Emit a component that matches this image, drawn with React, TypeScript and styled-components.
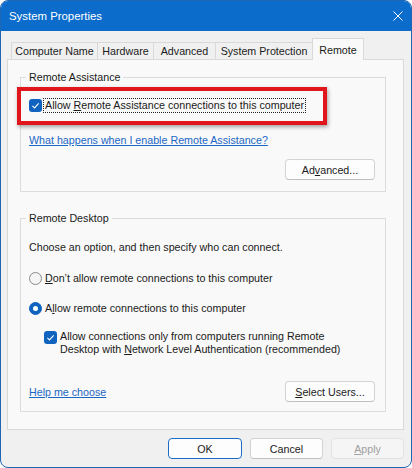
import React from 'react';
import { styled, createGlobalStyle } from 'styled-components';

const GlobalStyle = createGlobalStyle`
  html, body {
    margin: 0;
    padding: 0;
    background: #ffffff;
  }
  body {
    font-family: "Liberation Sans", Arial, sans-serif;
    font-size: 10.7px;
    color: #1a1a1a;
  }
`;

const CheckIcon: React.FC = () => (
  <svg width="13" height="13" viewBox="0 0 13 13">
    <path d="M3.4 6.9 L5.5 8.9 L9.7 4.4" fill="none" stroke="#fff" strokeWidth="1.1" />
  </svg>
);

const App: React.FC = () => {
  return (
    <>
      <GlobalStyle />
      <WindowStyle>
        <TitleBarStyle>
          <span>System Properties</span>
          <svg width="10" height="10" viewBox="0 0 10 10">
            <path d="M0.5 0.5 L9.5 9.5 M9.5 0.5 L0.5 9.5" stroke="#fff" strokeWidth="1" />
          </svg>
        </TitleBarStyle>
        <BodyStyle>
          <TabRowStyle>
            <TabStyle $w={87}>Computer Name</TabStyle>
            <TabStyle $w={57}>Hardware</TabStyle>
            <TabStyle $w={63}>Advanced</TabStyle>
            <TabStyle $w={98}>System Protection</TabStyle>
            <TabStyle $w={52} $active>
              Remote
            </TabStyle>
          </TabRowStyle>
          <PanelStyle>
            <GroupStyle $pb={11}>
              <legend>Remote Assistance</legend>
              <OptionRowStyle $mt={14}>
                <CheckBoxStyle>
                  <CheckIcon />
                </CheckBoxStyle>
                <FocusLabelStyle>
                  Allow <u>R</u>emote Assistance connections to this computer
                </FocusLabelStyle>
                <HighlightStyle />
              </OptionRowStyle>
              <LinkStyle $mt={21}>What happens when I enable Remote Assistance?</LinkStyle>
              <ActionRowStyle $mt={12}>
                <span />
                <ButtonStyle $w={90} $h={21}>
                  Ad<u>v</u>anced...
                </ButtonStyle>
              </ActionRowStyle>
            </GroupStyle>

            <GroupStyle $mt={19} $pb={9}>
              <legend>Remote Desktop</legend>
              <TextStyle>Choose an option, and then specify who can connect.</TextStyle>
              <OptionRowStyle $mt={17}>
                <RadioStyle />
                <span>
                  <u>D</u>on&rsquo;t allow remote connections to this computer
                </span>
              </OptionRowStyle>
              <OptionRowStyle $mt={16}>
                <RadioStyle $checked />
                <span>
                  A<u>l</u>low remote connections to this computer
                </span>
              </OptionRowStyle>
              <NestedOptionStyle>
                <CheckBoxStyle>
                  <CheckIcon />
                </CheckBoxStyle>
                <span>
                  Allow connections only from computers running Remote
                  <br />
                  Desktop with <u>N</u>etwork Level Authentication (recommended)
                </span>
              </NestedOptionStyle>
              <ActionRowStyle $mt={25}>
                <LinkStyle $mt={0}>Help me choose</LinkStyle>
                <ButtonStyle $w={90} $h={21}>
                  <u>S</u>elect Users...
                </ButtonStyle>
              </ActionRowStyle>
            </GroupStyle>
          </PanelStyle>
          <FooterStyle>
            <ButtonStyle $w={74} $h={21} $primary>
              OK
            </ButtonStyle>
            <ButtonStyle $w={73} $h={21}>
              Cancel
            </ButtonStyle>
            <ButtonStyle $w={73} $h={21} disabled>
              <u>A</u>pply
            </ButtonStyle>
          </FooterStyle>
        </BodyStyle>
      </WindowStyle>
    </>
  );
};

const WindowStyle = styled.div`
  width: 412px;
  height: 468px;
  box-sizing: border-box;
  border: 1px solid #1f66b5;
  border-radius: 8px;
  overflow: hidden;
  background: #f0f0f0;
  display: flex;
  flex-direction: column;
`;

const TitleBarStyle = styled.div`
  height: 30px;
  flex-shrink: 0;
  background: #0b6ccc;
  color: #ffffff;
  font-size: 11.4px;
  display: flex;
  align-items: center;
  justify-content: space-between;
  padding: 0 8px 0 8px;
`;

const BodyStyle = styled.div`
  flex: 1;
  display: flex;
  flex-direction: column;
  padding: 7px 7px 0 6px;
`;

const TabRowStyle = styled.div`
  display: flex;
  align-items: flex-end;
  height: 21px;
  padding-left: 4px;
  position: relative;
  z-index: 1;
`;

const TabStyle = styled.div<{ $w: number; $active?: boolean }>`
  width: ${(p) => p.$w}px;
  height: ${(p) => (p.$active ? 22 : 17)}px;
  margin-bottom: ${(p) => (p.$active ? -1 : 0)}px;
  margin-right: -1px;
  box-sizing: border-box;
  border: 1px solid #d9d9d9;
  border-bottom: none;
  background: ${(p) => (p.$active ? '#f9f9f9' : '#f0f0f0')};
  display: flex;
  align-items: center;
  justify-content: center;
  white-space: nowrap;
  position: relative;
  z-index: ${(p) => (p.$active ? 2 : 1)};
`;

const PanelStyle = styled.div`
  height: 371px;
  box-sizing: border-box;
  border: 1px solid #d9d9d9;
  background: #f9f9f9;
  padding: 10px 0 0 12px;
`;

const GroupStyle = styled.fieldset<{ $mt?: number; $pb: number }>`
  margin: ${(p) => p.$mt ?? 0}px 0 0 0;
  width: 366px;
  min-width: 0;
  box-sizing: border-box;
  border: 1px solid #dcdcdc;
  padding: 0 10px ${(p) => p.$pb}px 8px;

  legend {
    padding: 0 3px;
    margin-left: -3px;
    line-height: 14px;
  }
`;

const OptionRowStyle = styled.div<{ $mt: number }>`
  display: flex;
  align-items: center;
  gap: 3px;
  height: 14px;
  line-height: 14px;
  margin-top: ${(p) => p.$mt}px;
  position: relative;
  white-space: nowrap;
`;

const NestedOptionStyle = styled.div`
  display: flex;
  align-items: flex-start;
  gap: 3px;
  margin: 15px 0 0 15px;
  line-height: 13px;

  & > div {
    margin-top: 1px;
  }
`;

const CheckBoxStyle = styled.div`
  width: 13px;
  height: 13px;
  flex-shrink: 0;
  border-radius: 3px;
  background: #1063bf;
  display: flex;
`;

const RadioStyle = styled.div<{ $checked?: boolean }>`
  width: 13px;
  height: 13px;
  flex-shrink: 0;
  box-sizing: border-box;
  border-radius: 50%;
  border: 1px solid ${(p) => (p.$checked ? '#1063bf' : '#8a8a8a')};
  background: ${(p) => (p.$checked ? '#1063bf' : '#f5f5f5')};
  display: flex;
  align-items: center;
  justify-content: center;

  &::after {
    content: '';
    display: ${(p) => (p.$checked ? 'block' : 'none')};
    width: 5px;
    height: 5px;
    border-radius: 50%;
    background: #ffffff;
  }
`;

const FocusLabelStyle = styled.span`
  margin-left: -1px;
  padding: 0 1px;
  line-height: 13px;
  outline: 1px dotted #222;
`;

const HighlightStyle = styled.div`
  position: absolute;
  left: -12px;
  top: -11px;
  width: 310px;
  height: 38px;
  box-sizing: border-box;
  border: 4px solid #e1161c;
  box-shadow: 1px 2px 4px rgba(0, 0, 0, 0.35);
  pointer-events: none;
`;

const LinkStyle = styled.a<{ $mt: number }>`
  display: block;
  margin-top: ${(p) => p.$mt}px;
  line-height: 14px;
  color: #1a67c4;
  text-decoration: underline;
  cursor: pointer;
`;

const TextStyle = styled.div`
  margin-top: 15px;
  line-height: 14px;
`;

const ActionRowStyle = styled.div<{ $mt: number }>`
  display: flex;
  align-items: center;
  justify-content: space-between;
  margin-top: ${(p) => p.$mt}px;
`;

const ButtonStyle = styled.button<{ $w: number; $h: number; $primary?: boolean }>`
  width: ${(p) => p.$w}px;
  height: ${(p) => p.$h}px;
  box-sizing: border-box;
  padding: 0;
  font: inherit;
  color: #1a1a1a;
  background: #fdfdfd;
  border: 1px solid ${(p) => (p.$primary ? '#1a6cc4' : '#d3d3d3')};
  border-bottom-color: ${(p) => (p.$primary ? '#1a6cc4' : '#bfbfbf')};
  border-radius: 4px;

  &:disabled {
    color: #a0a0a0;
    background: #f5f5f5;
    border-color: #e2e2e2;
  }
`;

const FooterStyle = styled.div`
  display: flex;
  justify-content: flex-end;
  gap: 8px;
  margin-top: 8px;
`;

export default App;
